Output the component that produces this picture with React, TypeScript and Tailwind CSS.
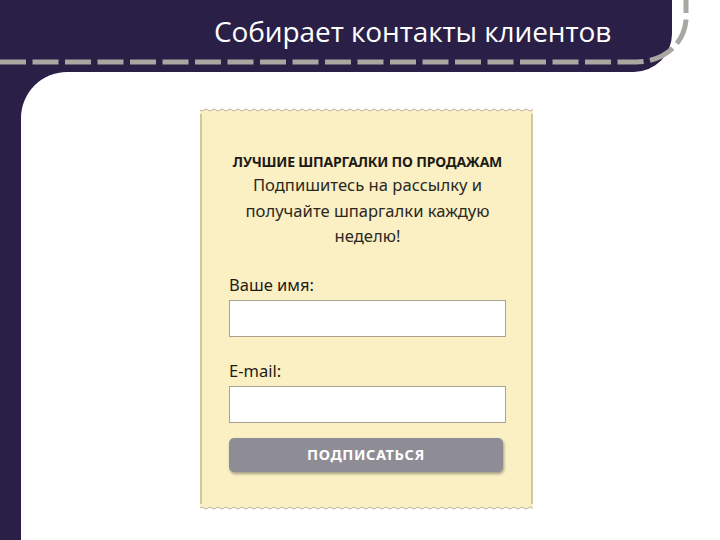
import React from "react";

function Wave({ flip }: { flip?: boolean }) {
  return (
    <svg width="333" height="6" className="block" style={flip ? { transform: "scaleY(-1)" } : undefined}>
      <defs>
        <pattern id={flip ? "wb" : "wt"} x="0" y="0" width="8" height="6" patternUnits="userSpaceOnUse">
          <rect width="8" height="6" fill="#faf0c4" />
          <path d="M0 0 H8 V4 Q6 0 4 2 Q2 4 0 2 Z" fill="#ffffff" />
          <path d="M0 2 Q2 4 4 2 Q6 0 8 2" fill="none" stroke="#b9b198" strokeWidth="1" />
        </pattern>
      </defs>
      <rect width="333" height="6" fill={`url(#${flip ? "wb" : "wt"})`} />
    </svg>
  );
}

export default function App() {
  return (
    <div className="relative w-[720px] h-[540px] overflow-hidden bg-white" style={{ fontFamily: '"Noto Sans", sans-serif' }}>
      {/* header */}
      <div className="flex h-[72px]">
        <div className="w-[672px] h-[72px] bg-[#2a1f47] rounded-br-[38px] flex items-start">
          <div className="pl-[214px] pt-[13px] text-white text-[28px] leading-[36px] tracking-[-0.1px]" style={{ fontFamily: '"Open Sans", sans-serif' }}>
            Собирает контакты клиентов
          </div>
        </div>
      </div>
      {/* body */}
      <div className="bg-[#2a1f47] h-[468px] pl-[21px]">
        <div className="bg-white h-full rounded-tl-[46px] flex flex-col items-start pt-[36px] pl-[179px]">
          <div className="w-[333px] flex flex-col">
            <Wave />
            <div className="bg-[#faf0c4] border-x-[2px] border-[#cfc6a6] h-[390px] flex flex-col pt-[40px] pl-[27px] pr-[25px]">
              <div className="text-center text-[#1e1b14] font-bold text-[14px] leading-[16px] tracking-[-0.2px]" style={{ fontFamily: '"Noto Sans", sans-serif' }}>
                ЛУЧШИЕ ШПАРГАЛКИ ПО ПРОДАЖАМ
              </div>
              <div className="text-center text-[#2b281f] text-[16.6px] leading-[25.5px] mt-[2px]">
                Подпишитесь на рассылку и<br />получайте шпаргалки каждую<br />неделю!
              </div>
              <div className="mt-[25px] text-[#1e1b14] text-[16.5px] leading-[22px]">Ваше имя:</div>
              <div className="mt-[4px] h-[37px] w-[277px] bg-white border border-[#aaa290]" />
              <div className="mt-[23px] text-[#1e1b14] text-[16.5px] leading-[22px]">E-mail:</div>
              <div className="mt-[4px] h-[37px] w-[277px] bg-white border border-[#aaa290]" />
              <div className="mt-[15px] h-[34px] w-[274px] bg-[#8e8d95] rounded-[5px] shadow-[1px_2px_3px_rgba(0,0,0,0.35)] flex items-center justify-center text-white font-bold text-[14.5px] tracking-[0.6px]">
                ПОДПИСАТЬСЯ
              </div>
            </div>
            <Wave flip />
          </div>
        </div>
      </div>
      {/* dashed stitching */}
      <svg className="absolute left-0 top-0" width="720" height="80">
        <path d="M0 62 L636 62 C664 62 684 44 686 20 L686 0" fill="none" stroke="#aaa6a2" strokeWidth="5" strokeDasharray="26 6.5" />
      </svg>
    </div>
  );
}
